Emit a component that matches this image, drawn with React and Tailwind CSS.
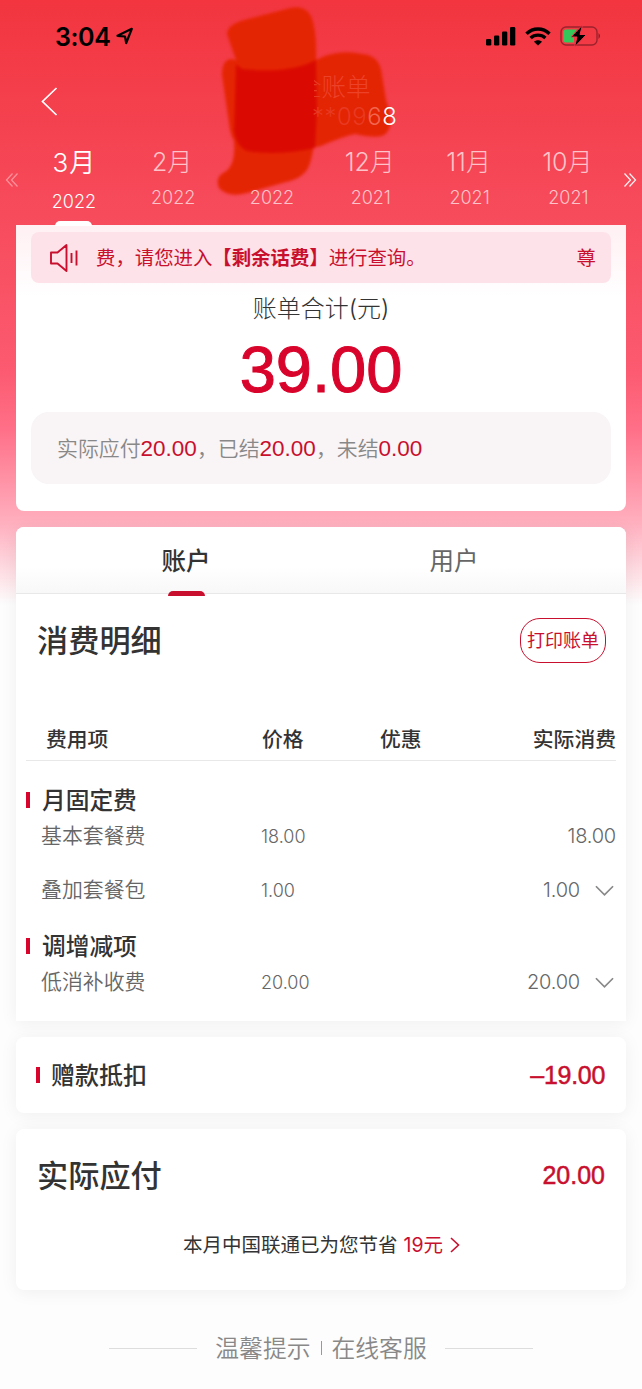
import React, { useState } from "react";

const months = [
  { month: "3月", year: "2022" },
  { month: "2月", year: "2022" },
  { month: "", year: "2022" },
  { month: "12月", year: "2021" },
  { month: "11月", year: "2021" },
  { month: "10月", year: "2021" },
];

const groups = [
  {
    title: "月固定费",
    height: "h-[146px]",
    items: [
      { name: "基本套餐费", price: "18.00", actual: "18.00" },
      { name: "叠加套餐包", price: "1.00", actual: "1.00", more: true },
    ],
  },
  {
    title: "调增减项",
    height: "h-[88px]",
    items: [{ name: "低消补收费", price: "20.00", actual: "20.00", more: true }],
  },
];

const StatusBar = () => (
  <div className="flex h-[72px] items-center justify-between pl-[55px] pr-[40px] text-black">
    <div className="flex items-center pt-[2px]">
      <span className="text-[25px] leading-none font-semibold tracking-[-0.4px]">3:04</span>
      <svg className="mt-[-2px] ml-[6px]" width="18" height="18" viewBox="0 0 18 18" fill="none">
        <path d="M1.5 8.8 15.8 1.8 10.200 16 9 9.500Z" stroke="currentColor" strokeWidth="2.200" strokeLinejoin="round" />
      </svg>
    </div>
    <div className="flex items-center">
      <svg width="30" height="19" viewBox="0 0 30 19" fill="currentColor">
        <rect x="0" y="12" width="5.3" height="6.5" rx="1.3" />
        <rect x="8" y="8.500" width="5.3" height="10" rx="1.3" />
        <rect x="16" y="4.5" width="5.3" height="14" rx="1.3" />
        <rect x="24" y="0" width="5.3" height="18.5" rx="1.3" />
      </svg>
      <svg className="ml-[9px]" width="26" height="19" viewBox="0 0 26 19" fill="none" stroke="currentColor">
        <path d="M1.5 6.8C8 .4 18 .4 24.500 6.800" strokeWidth="3.4" />
        <path d="M5.600 11C9.800 7.200 16.200 7.200 20.400 11" strokeWidth="3.3" />
        <path d="M9 14.700C11.300 12.700 14.700 12.700 17 14.700L13 18.600Z" fill="currentColor" stroke="none" />
      </svg>
      <svg className="ml-[9px]" width="42" height="22" viewBox="0 0 42 22">
        <rect x="1" y="2" width="36" height="18" rx="5" fill="none" stroke="#9c222d" strokeWidth="1.4" />
        <path d="M6 4.500H17L11 12H14V17.500H6Q3.300 17.500 3.300 15V7Q3.300 4.500 6 4.500Z" fill="#34c759" />
        <path d="M38.600 8Q41 11 38.600 14Z" fill="#70131c" />
        <path d="M22.500 0 11 12H17L14.500 22 26.500 9.500H20Z" fill="#000" stroke="#f2394a" strokeWidth="1" />
      </svg>
    </div>
  </div>
);

// hand painted marker over the account name
const Marker = () => (
  <svg className="pointer-events-none absolute top-0 left-0 blur-[1.500px]" width="642" height="225" viewBox="0 0 642 225">
    <path
      d="M227 34Q227 25 244 20L290 8Q305 5 311 16Q317 30 316 60L317 110Q315 150 309 166Q304 178 286 182L247 193Q228 198 219 188Q215 178 223 173Q236 167 234 142L236 60Z"
      fill="#e42503"
    />
    <path
      d="M222 75Q222 59 232 59Q238 59 242 69L268 71Q300 69 318 59Q338 49 362 54Q380 55 382 75L386 100Q397 130 382 136Q372 138 355 134Q344 136 321 146Q280 156 245 151Q233 145 230 130Z"
      fill="#e42503"
    />
    <path d="M236 64 242 69Q290 74 316 60L317 110 315 148Q280 156 247 151Q237 147 234 132Z" fill="#da0a02" />
  </svg>
);

const Header = () => (
  <div className="flex h-[79px] items-start px-[41px] pt-[15px] text-white">
    <svg width="18" height="30" viewBox="0 0 18 30" fill="none" stroke="currentColor" strokeWidth="1.7">
      <path d="M15.500 1 1.500 14.500 15.500 28" />
    </svg>
  </div>
);

const AccountName = () => (
  <div className="absolute top-[70px] left-[297px] w-[110px]">
    <p className="text-[24.500px] leading-[34px] font-light whitespace-nowrap text-[#ec4229]">
      <span className="bg-linear-to-r from-transparent from-70% to-[#e83a22] to-70% bg-clip-text text-transparent">全</span>
      账单
    </p>
    <p className="mt-[-2px] ml-[15px] text-[23.800px] leading-[30px] font-light tracking-[0.600px] whitespace-nowrap text-[#e83a22]">
      **09<span className="text-[#f0664f]">6</span>
      <span className="font-[350] text-white">8</span>
    </p>
  </div>
);

const MonthTabs = () => (
  <div className="relative flex h-[74px] items-start pl-[24px]">
    <svg className="absolute top-[21px] left-[5px] text-white/40" width="14" height="16" viewBox="0 0 14 16" fill="none" stroke="currentColor" strokeWidth="1.300">
      <path d="M7.500 1.500 1.500 8 7.500 14.500M12.500 1.500 6.500 8 12.500 14.500" />
    </svg>
    {months.map((item, i) => (
      <div
        key={i}
        className={
          i === 0
            ? "flex w-[98.800px] flex-col items-center font-[350] text-white"
            : "flex w-[98.800px] flex-col items-center font-light text-[#fec3c8]"
        }
      >
        <span
          className={
            i === 0
              ? "mt-[-6px] h-[36px] pl-[2px] text-[26px] leading-[36px] tracking-[1px]"
              : "mt-[-7px] h-[36px] text-[25px] leading-[36px]"
          }
        >
          {item.month}
        </span>
        <span className={i === 0 ? "mt-[9px] pl-px text-[18px] leading-[24px]" : "mt-[6px] pl-[2px] text-[18px] leading-[24px]"}>
          {item.year}
        </span>
        {i === 0 && <span className="mt-[7px] ml-px h-[5px] w-[37px] rounded-t-[5px] bg-white" />}
      </div>
    ))}
    <svg className="absolute top-[21px] right-[5px] text-white/90" width="14" height="16" viewBox="0 0 14 16" fill="none" stroke="currentColor" strokeWidth="1.300">
      <path d="M1.500 1.500 7.500 8 1.500 14.500M6.500 1.500 12.500 8 6.500 14.500" />
    </svg>
  </div>
);

const Total = () => (
  <div className="mx-4 h-[286px] rounded-b-lg bg-linear-to-b from-[#fff0f3] to-white to-25% px-[15px] pt-[7px]">
    <div className="flex h-[51px] items-center rounded-lg bg-[#fee2e9] pr-[15px] pl-[18px] text-[19.400px] text-[#c8102e]">
      <svg width="30" height="30" viewBox="0 0 30 30" fill="none" stroke="currentColor" strokeWidth="1.900">
        <path d="M2 9.500H8.500L17.500 2V28L8.500 20.500H2Z" strokeLinejoin="round" />
        <path d="M22.500 10V20M27.500 7.500V22.500" />
      </svg>
      <p className="ml-[17px] flex-1 pt-[2px] whitespace-nowrap">
        费，请您进入<b className="font-bold">【剩余话费】</b>进行查询。
      </p>
      <span className="pt-[2px]">尊</span>
    </div>
    <p className="mt-[9px] text-center text-[24px] leading-[34px] font-light text-[#333]">账单合计(元)</p>
    <p className="mt-[9px] h-[65px] text-center font-['Liberation_Sans'] text-[65px] leading-[70px] text-[#d9042b] [-webkit-text-stroke:1px_#d9042b]">
      39.00
    </p>
    <div className="mt-[12px] flex h-[72px] items-center rounded-[18px] bg-[#f9f4f6] pl-[26px] text-[20.900px] font-[350] text-[#888]">
      <p className="pt-[2px] whitespace-nowrap">
        实际应付<span className="font-['Liberation_Sans'] text-[22.500px] font-normal text-[#c8102e]">20.00</span>，已结
        <span className="font-['Liberation_Sans'] text-[22.500px] font-normal text-[#c8102e]">20.00</span>，未结
        <span className="font-['Liberation_Sans'] text-[22.500px] font-normal text-[#c8102e]">0.00</span>
      </p>
    </div>
  </div>
);

const Chevron = () => (
  <svg className="mt-px mr-[2px]" width="19" height="12" viewBox="0 0 20 12" fill="none" stroke="#888" strokeWidth="1.800">
    <path d="M1 1 10 10 19 1" />
  </svg>
);

const Detail = () => {
  const [tab, setTab] = useState(0);
  return (
    <div className="mx-4 mt-4 h-[494px] rounded-t-lg bg-white shadow-[0_2px_18px_rgba(0,0,0,0.06)]">
      <div className="flex h-[67px] rounded-t-lg border-b border-[#e8e8e8] bg-linear-to-b from-white from-60% to-[#f8f8f8] pr-[38px] pl-[36px]">
        {["账户", "用户"].map((name, i) => (
          <button
            key={name}
            onClick={() => setTab(i)}
            className={
              tab === i
                ? "relative flex-1 pt-[2px] text-[24.500px] font-medium text-[#333]"
                : "relative flex-1 pt-[2px] text-[24.500px] font-normal text-[#666]"
            }
          >
            {name}
            {tab === i && <span className="absolute bottom-[-3px] left-[116px] h-[5px] w-[37px] rounded-t-[5px] bg-[#c8102e]" />}
          </button>
        ))}
      </div>
      <div className="flex h-[93px] items-center justify-between pr-[20px] pl-[21px]">
        <h2 className="pt-[2px] text-[31.200px] font-medium text-[#333]">消费明细</h2>
        <button className="h-[45px] w-[86px] rounded-[20px] border-[1.500px] border-[#c8102e] text-[18px] whitespace-nowrap text-[#c8102e]">
          打印账单
        </button>
      </div>
      <div className="mr-[10px] ml-[10px] flex h-[74px] items-end border-b border-[#e8e8e8] pb-[5px] text-[20.800px] leading-[30px] font-medium text-[#333]">
        <span className="w-[216px] pl-[20px]">费用项</span>
        <span className="w-[118px] pl-[20px]">价格</span>
        <span className="pl-[20px]">优惠</span>
        <span className="ml-auto">实际消费</span>
      </div>
      <div className="mr-[10px] ml-[10px] pt-[21px]">
        {groups.map((group) => (
          <div key={group.title} className={group.height}>
            <div className="flex h-[36px] items-center">
              <span className="h-[16px] w-[4px] bg-[#d9042b]" />
              <span className="ml-[12px] pt-px text-[23.700px] font-medium text-[#333]">{group.title}</span>
            </div>
            {group.items.map((item) => (
              <div key={item.name} className="mb-[18px] flex h-[36px] items-center font-light text-[#666]">
                <span className="w-[235px] pl-[15px] text-[20.900px] font-[350]">{item.name}</span>
                <span className="text-[18px]">{item.price}</span>
                <span className="mr-[15px] ml-auto text-[20px] font-[350] tracking-[-0.200px] last:mr-0">{item.actual}</span>
                {item.more && <Chevron />}
              </div>
            ))}
          </div>
        ))}
      </div>
    </div>
  );
};

const App = () => {
  return (
    <div className="relative h-[1389px] w-[642px] overflow-hidden bg-[#fdfdfd] font-[Inter,'Noto_Sans_CJK_SC',sans-serif]">
      <div className="bg-[linear-gradient(180deg,#f2353f_0px,#f74c5d_225px,#fc5a70_370px,#ff7088_430px,#ffb1c0_525px,#fdfdfd_605px)]">
        <StatusBar />
        <Header />
        <Marker />
        <AccountName />
        <MonthTabs />
        <Total />
        <Detail />
        <div className="mx-4 mt-4 flex h-[76px] items-center rounded-lg bg-white px-[20px] shadow-[0_2px_18px_rgba(0,0,0,0.06)]">
          <span className="h-[16px] w-[4px] bg-[#d9042b]" />
          <span className="ml-[11px] pt-[2px] text-[24px] font-medium text-[#333]">赠款抵扣</span>
          <span className="mr-px ml-auto pt-[2px] font-['Liberation_Sans'] text-[25px] tracking-[-0.300px] text-[#c8102e] [-webkit-text-stroke:0.5px_#c8102e]">
            –19.00
          </span>
        </div>
        <div className="mx-4 mt-4 h-[161px] rounded-lg bg-white px-[21px] shadow-[0_2px_18px_rgba(0,0,0,0.06)]">
          <div className="flex h-[92px] items-center justify-between">
            <h2 className="pt-[3px] text-[31.200px] font-medium text-[#333]">实际应付</h2>
            <span className="pt-[2px] font-['Liberation_Sans'] text-[25px] text-[#c8102e] [-webkit-text-stroke:0.5px_#c8102e]">20.00</span>
          </div>
          <div className="flex h-[48px] items-center justify-center pl-px text-[19.500px] text-[#333]">
            <span className="pt-[2px]">本月中国联通已为您节省</span>
            <span className="ml-[6px] pt-[2px] text-[#c8102e]">19元</span>
            <svg className="ml-[7px]" width="10" height="16" viewBox="0 0 10 16" fill="none" stroke="#c8102e" strokeWidth="1.600">
              <path d="M1 1 8.500 8 1 15" />
            </svg>
          </div>
        </div>
        <div className="flex h-[116px] items-center justify-center text-[23.800px] font-[350] text-[#888]">
          <span className="h-px w-[88px] bg-[#ddd]" />
          <span className="ml-[18px] pt-px">温馨提示</span>
          <span className="mx-[10px] h-[14px] w-px bg-[#999]" />
          <span className="mr-[18px] pt-px">在线客服</span>
          <span className="h-px w-[88px] bg-[#ddd]" />
        </div>
      </div>
    </div>
  );
};

export default App;
